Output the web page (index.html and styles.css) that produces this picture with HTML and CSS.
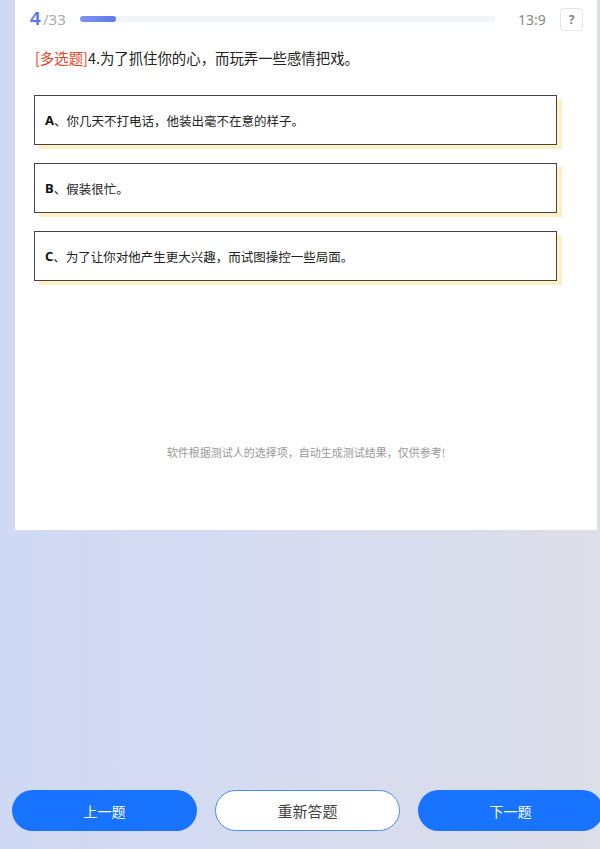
FILE: index.html
```html
<!DOCTYPE html>
<html lang="zh">
<head>
<meta charset="utf-8">
<title>多选题</title>
<link rel="stylesheet" href="styles.css">
</head>
<body>
<div class="page">
  <div class="card">
    <div class="header">
      <span class="num">4</span><span class="total">/33</span>
      <div class="bar"><div class="fill" style="width:36px"></div></div>
      <span class="time">13:9</span>
      <span class="help">?</span>
    </div>
    <div class="title"><span class="tag">[多选题]</span>4.为了抓住你的心，而玩弄一些感情把戏。</div>
    <div class="options">
      <div class="option"><b>A</b>、你几天不打电话，他装出毫不在意的样子。</div>
      <div class="option"><b>B</b>、假装很忙。</div>
      <div class="option"><b>C</b>、为了让你对他产生更大兴趣，而试图操控一些局面。</div>
    </div>
    <div class="note">软件根据测试人的选择项，自动生成测试结果，仅供参考!</div>
  </div>
  <div class="footer">
    <button class="btn primary">上一题</button>
    <button class="btn outline">重新答题</button>
    <button class="btn primary">下一题</button>
  </div>
</div>
</body>
</html>
```
FILE: styles.css
```css
html, body {
  margin: 0;
  padding: 0;
}
body {
  font-family: "Noto Sans CJK SC", "Noto Sans", sans-serif;
  background: linear-gradient(90deg, #d0d9f4 0%, #d6dbef 50%, #dcdee8 100%);
  overflow: hidden;
}
.page {
  width: 600px;
  height: 849px;
  display: flex;
  flex-direction: column;
  overflow: hidden;
}
.card {
  margin-left: 15px;
  width: 582px;
  height: 530px;
  background: #fff;
  box-sizing: border-box;
  flex: none;
}
.header {
  height: 38px;
  display: flex;
  align-items: center;
  padding-left: 15px;
}
.num {
  font-family: "Liberation Sans", "Noto Sans", sans-serif;
  font-weight: bold;
  font-size: 19px;
  color: #5a76ec;
  width: 13px;
}
.total {
  font-family: "Noto Sans", sans-serif;
  font-size: 15px;
  color: #aaaaaa;
  width: 22px;
}
.bar {
  margin-left: 15px;
  width: 415px;
  height: 6px;
  border-radius: 3px;
  background: #f2f3f7;
  flex: none;
}
.fill {
  height: 6px;
  border-radius: 3px;
  background: linear-gradient(90deg, #7d93f2, #5f7cef);
}
.time {
  margin-left: 23px;
  font-family: "Noto Sans", sans-serif;
  font-size: 14px;
  color: #888;
  width: 42px;
}
.help {
  width: 21px;
  height: 21px;
  border: 1px solid #e6e6e6;
  border-radius: 3px;
  display: flex;
  align-items: center;
  justify-content: center;
  font-family: "Noto Sans", sans-serif;
  font-size: 12px;
  font-weight: bold;
  color: #888;
}
.title {
  margin: 9px 0 0 20px;
  font-size: 14.4px;
  line-height: 22px;
  color: #222;
}
.tag {
  color: #f0401e;
}
.options {
  margin: 26px 0 0 19px;
  display: flex;
  flex-direction: column;
  gap: 18px;
}
.option {
  width: 523px;
  height: 50px;
  box-sizing: border-box;
  border: 1px solid #444;
  box-shadow: 5px 4px 0 #fdf0c4;
  display: flex;
  align-items: center;
  padding-left: 10px;
  font-size: 12.5px;
  color: #222;
}
.option b {
  font-family: "Noto Sans", sans-serif;
  font-weight: bold;
  font-size: 13px;
  color: #111;
}
.note {
  margin-top: 163px;
  text-align: center;
  font-size: 11px;
  line-height: 16px;
  color: #999;
}
.footer {
  margin-top: auto;
  padding: 0 0 18px 12px;
  display: flex;
  gap: 18px;
}
.btn {
  flex: none;
  width: 185px;
  height: 41px;
  border-radius: 21px;
  font-family: "Noto Sans CJK SC", sans-serif;
  font-size: 14px;
  cursor: pointer;
}
.primary {
  background: #1873ff;
  border: none;
  color: #fff;
}
.outline {
  background: #fff;
  border: 1px solid #4a8bf5;
  color: #444;
  font-size: 15px;
}
```
